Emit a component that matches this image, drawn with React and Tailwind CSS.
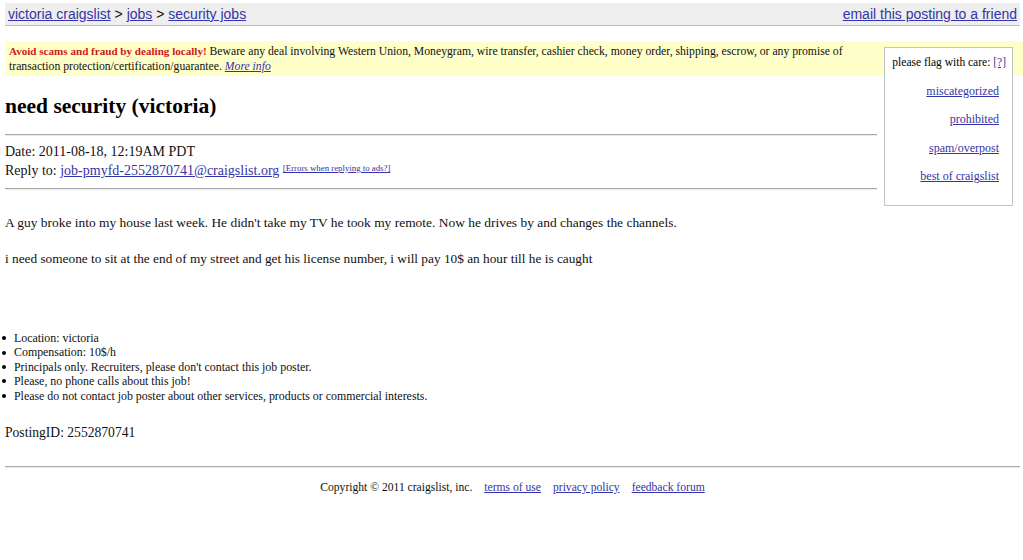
const serif = "font-['Liberation_Serif','Times_New_Roman',serif]";
const sans = "font-['Liberation_Sans',Arial,sans-serif]";
const link = "text-[#3434a8] underline";

// old-style inset horizontal rule; overflow-hidden keeps it beside the flag box
function Rule({ className = "" }) {
  return <div className={`h-[2px] overflow-hidden border-t border-t-[#a9a9a9] border-b border-b-[#ececec] ${className}`} />;
}

function FlagBox() {
  const flags = ["miscategorized", "prohibited", "spam/overpost", "best of craigslist"];
  return (
    <div className="float-right mt-[3px] ml-[7px] w-[129px] border border-[#c4c4c4] bg-white px-[6px] pt-[7px] pb-[22px] text-right text-[11.5px] leading-[14px] text-black">
      <div>
        please flag with care: <a className={link}>[?]</a>
      </div>
      {flags.map((f) => (
        <div key={f} className="mt-[14.5px] mr-[7px] text-[12px]">
          <a className={link}>{f}</a>
        </div>
      ))}
    </div>
  );
}

export default function App() {
  const notes = [
    "Location: victoria",
    "Compensation: 10$/h",
    "Principals only. Recruiters, please don't contact this job poster.",
    "Please, no phone calls about this job!",
    "Please do not contact job poster about other services, products or commercial interests.",
  ];

  return (
    <div className={`min-h-[560px] w-full bg-white pt-[3px] pl-[5px] pr-[3px] text-[#111] ${serif}`}>
      {/* breadcrumb bar */}
      <div className={`flex h-[23px] items-center justify-between border-b border-[#bdbdbd] bg-[#eeeeee] px-[3px] text-[14px] leading-[22px] ${sans}`}>
        <div>
          <a className={link}>victoria craigslist</a> &gt; <a className={link}>jobs</a> &gt;{" "}
          <a className={link}>security jobs</a>
        </div>
        <a className={link}>email this posting to a friend</a>
      </div>

      {/* scam warning */}
      <div className="-mr-[3px] mt-[15px] bg-[#ffffca] pt-[3px] pb-[2px] pl-[4px] pr-[10px] text-[11.7px] leading-[15px]">
        <FlagBox />
        <b className="text-[11.1px] text-[#d01818]">Avoid scams and fraud by dealing locally!</b> Beware any deal
        involving Western Union, Moneygram, wire transfer, cashier check, money order, shipping, escrow, or any promise
        of
        <br />
        transaction protection/certification/guarantee. <a className={`${link} italic`}>More info</a>
      </div>

      <h2 className="mt-[18px] text-[21.5px] font-bold leading-[24px] text-black">need security (victoria)</h2>

      <Rule className="mt-[16px]" />
      <div className="mt-[8px] text-[14px] leading-[16px]">Date: 2011-08-18, 12:19AM PDT</div>
      <div className="mt-[3px] text-[14px] leading-[16px]">
        Reply to: <a className={link}>job-pmyfd-2552870741@craigslist.org</a>{" "}
        <a className={`${link} relative -top-[4px] text-[8.8px]`}>[Errors when replying to ads?]</a>
      </div>
      <Rule className="mt-[8px]" />

      <p className="mt-[24px] text-[13.45px] leading-[18px]">
        A guy broke into my house last week. He didn't take my TV he took my remote. Now he drives by and changes the
        channels.
      </p>
      <p className="mt-[18px] text-[13.3px] leading-[18px]">
        i need someone to sit at the end of my street and get his license number, i will pay 10$ an hour till he is
        caught
      </p>

      <ul className="-ml-[5px] mt-[63px] text-[11.9px] leading-[14.4px]">
        {notes.map((n) => (
          <li key={n} className="flex items-center">
            <span className="flex w-[14px] shrink-0 pl-[2px]">
              <span className="h-[4px] w-[4px] rounded-full bg-black" />
            </span>
            {n}
          </li>
        ))}
      </ul>

      <div className="mt-[21px] text-[13.6px] leading-[18px]">PostingID: 2552870741</div>

      <Rule className="mt-[24px]" />

      <div className="mt-[13px] flex justify-center gap-[12px] text-[11.6px] leading-[14px]">
        <span>Copyright © 2011 craigslist, inc.</span>
        <a className={link}>terms of use</a>
        <a className={link}>privacy policy</a>
        <a className={link}>feedback forum</a>
      </div>
    </div>
  );
}
